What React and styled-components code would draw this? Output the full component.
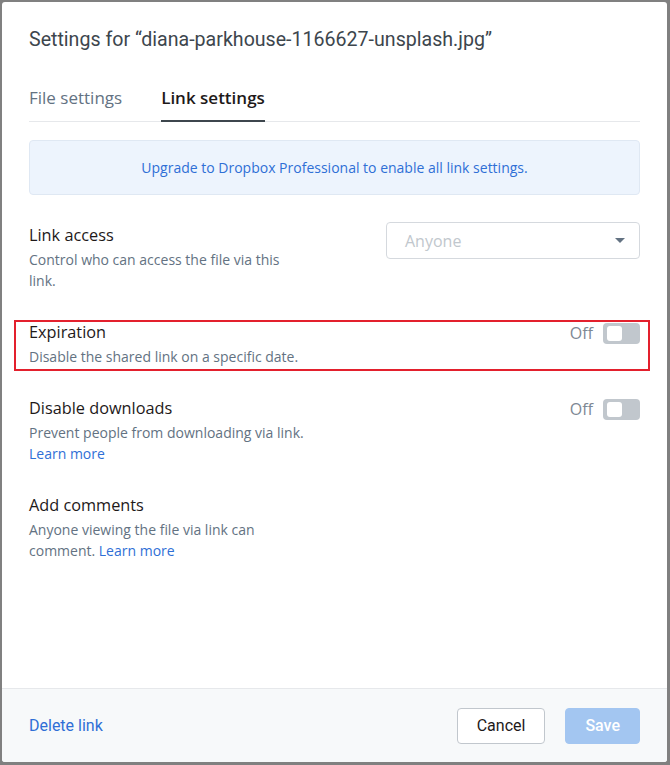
import React, { useState } from 'react'
import styled, { createGlobalStyle } from 'styled-components'

const GlobalStyle = createGlobalStyle`
  html, body {
    margin: 0;
    padding: 0;
    background: #808080;
  }
  * {
    box-sizing: border-box;
  }
`

const Modal = styled.div`
  display: flex;
  flex-direction: column;

  width: 665px;
  height: 760px;
  margin: 2px 3px 3px 2px;

  background: #fff;
  border-radius: 3px;
  overflow: hidden;

  font-family: "Open Sans", "Liberation Sans", sans-serif;
  color: #1e1919;
`

const Body = styled.div`
  flex: 1 0 auto;
  padding: 24px 27px 0 27px;
`

const Title = styled.h1`
  margin: 0;
  font-family: Roboto, "Liberation Sans", sans-serif;
  font-size: 19.6px;
  font-weight: 400;
  line-height: 28px;
  color: #3d464d;
`

const Tabs = styled.div`
  display: flex;
  gap: 39px;
  margin-top: 32px;
  border-bottom: 1px solid #e6e8eb;
`

const Tab = styled.button`
  padding: 0 0 10px;
  margin: 0 0 -1px;

  background: none;
  border: none;
  border-bottom: 2px solid ${p => (p.$active ? '#3d464d' : 'transparent')};

  font-family: inherit;
  font-size: 17px;
  line-height: 24px;
  font-weight: ${p => (p.$active ? 600 : 400)};
  color: ${p => (p.$active ? '#1e1919' : '#637282')};
  cursor: pointer;
`

const Banner = styled.div`
  display: flex;
  align-items: center;
  justify-content: center;

  height: 55px;
  margin-top: 18px;

  background: #edf4fd;
  border: 1px solid #dfe8f3;
  border-radius: 4px;

  font-size: 14px;
  color: #2f6fd6;
`

const Rows = styled.div`
  display: flex;
  flex-direction: column;
  gap: 29px;
  margin-top: 28px;
`

const Row = styled.div`
  position: relative;
  display: flex;
  justify-content: space-between;
  align-items: flex-start;

  ${p => p.$highlight && `
    &::after {
      content: '';
      position: absolute;
      top: 0;
      bottom: -4px;
      left: -15px;
      right: -10px;
      border: 2px solid #e3202d;
      pointer-events: none;
    }
  `}
`

const Info = styled.div`
  max-width: 276px;
`

const RowTitle = styled.div`
  font-size: 16.3px;
  line-height: 24px;
  color: #1e1919;
`

const RowDesc = styled.div`
  margin-top: 2px;
  font-size: 14px;
  line-height: 21px;
  color: #637282;
`

const Link = styled.a`
  color: #2f6fd6;
  text-decoration: none;
  cursor: pointer;
`

const Select = styled.div`
  display: flex;
  align-items: center;
  justify-content: space-between;

  width: 254px;
  height: 37px;
  margin-top: -1px;
  padding: 0 14px 0 18px;

  border: 1px solid #d5d9de;
  border-radius: 4px;

  font-size: 16px;
  color: #c1c7cd;
`

const Caret = styled.span`
  width: 0;
  height: 0;
  border-left: 5px solid transparent;
  border-right: 5px solid transparent;
  border-top: 5px solid #637282;
`

const ToggleWrap = styled.div`
  display: flex;
  align-items: center;
  gap: 10px;
  margin-top: 2px;
`

const ToggleLabel = styled.span`
  font-size: 16px;
  color: #7d8894;
`

const Switch = styled.button`
  position: relative;
  width: 37px;
  height: 21px;
  padding: 0;

  background: ${p => (p.$on ? '#0061fe' : '#c1c7cd')};
  border: none;
  border-radius: 4px;
  cursor: pointer;

  &::after {
    content: '';
    position: absolute;
    top: 3px;
    left: ${p => (p.$on ? '19px' : '4px')};
    width: 15px;
    height: 15px;
    background: #fff;
    border-radius: 3px;
  }
`

const Footer = styled.div`
  display: flex;
  align-items: center;
  justify-content: space-between;

  height: 74px;
  padding: 0 27px;

  background: #f7f9fa;
  border-top: 1px solid #e6e8eb;

  font-family: Roboto, "Liberation Sans", sans-serif;
`

const FooterLink = styled.a`
  font-size: 16px;
  color: #2f6fd6;
  cursor: pointer;
`

const Buttons = styled.div`
  display: flex;
  gap: 20px;
`

const Button = styled.button`
  height: 36px;
  padding: 0 19px;

  background: ${p => (p.$primary ? '#a3c6f1' : '#fff')};
  border: 1px solid ${p => (p.$primary ? '#a3c6f1' : '#c1c7cd')};
  border-radius: 4px;

  font-family: inherit;
  font-size: 16px;
  font-weight: ${p => (p.$primary ? 500 : 400)};
  color: ${p => (p.$primary ? '#fff' : '#1e1919')};
  cursor: pointer;
`

const ToggleSetting = ({ title, children, highlight }) => {
    const [on, setOn] = useState(false)
    return (
        <Row $highlight={highlight}>
            <Info>
                <RowTitle>{title}</RowTitle>
                <RowDesc>{children}</RowDesc>
            </Info>
            <ToggleWrap>
                <ToggleLabel>{on ? 'On' : 'Off'}</ToggleLabel>
                <Switch $on={on} onClick={() => setOn(!on)}/>
            </ToggleWrap>
        </Row>
    )
}

const App = () => {
    const [tab, setTab] = useState('link')
    return (
        <>
            <GlobalStyle/>
            <Modal>
                <Body>
                    <Title>Settings for “diana-parkhouse-1166627-unsplash.jpg”</Title>
                    <Tabs>
                        <Tab $active={tab === 'file'} onClick={() => setTab('file')}>File settings</Tab>
                        <Tab $active={tab === 'link'} onClick={() => setTab('link')}>Link settings</Tab>
                    </Tabs>
                    <Banner>Upgrade to Dropbox Professional to enable all link settings.</Banner>
                    <Rows>
                        <Row>
                            <Info>
                                <RowTitle>Link access</RowTitle>
                                <RowDesc>Control who can access the file via this link.</RowDesc>
                            </Info>
                            <Select>
                                Anyone
                                <Caret/>
                            </Select>
                        </Row>
                        <ToggleSetting title="Expiration" highlight>
                            Disable the shared link on a specific date.
                        </ToggleSetting>
                        <ToggleSetting title="Disable downloads">
                            Prevent people from downloading via link.<br/>
                            <Link>Learn more</Link>
                        </ToggleSetting>
                        <Row>
                            <Info>
                                <RowTitle>Add comments</RowTitle>
                                <RowDesc>
                                    Anyone viewing the file via link can comment. <Link>Learn more</Link>
                                </RowDesc>
                            </Info>
                        </Row>
                    </Rows>
                </Body>
                <Footer>
                    <FooterLink>Delete link</FooterLink>
                    <Buttons>
                        <Button>Cancel</Button>
                        <Button $primary>Save</Button>
                    </Buttons>
                </Footer>
            </Modal>
        </>
    )
}

export default App
